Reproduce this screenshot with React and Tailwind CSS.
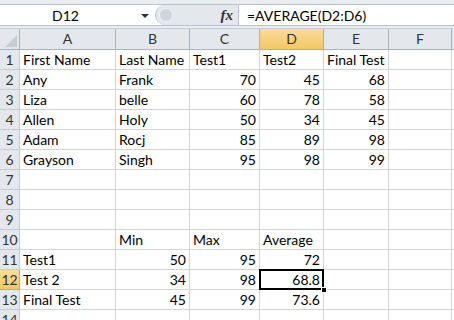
const cols = ["A", "B", "C", "D", "E", "F"];

const rows = [
  ["First Name", "Last Name", "Test1", "Test2", "Final Test", ""],
  ["Any", "Frank", 70, 45, 68, ""],
  ["Liza", "belle", 60, 78, 58, ""],
  ["Allen", "Holy", 50, 34, 45, ""],
  ["Adam", "Rocj", 85, 89, 98, ""],
  ["Grayson", "Singh", 95, 98, 99, ""],
  ["", "", "", "", "", ""],
  ["", "", "", "", "", ""],
  ["", "", "", "", "", ""],
  ["", "Min", "Max", "Average", "", ""],
  ["Test1", 50, 95, 72, "", ""],
  ["Test 2", 34, 98, 68.8, "", ""],
  ["Final Test", 45, 99, 73.6, "", ""],
  ["", "", "", "", "", ""],
];

const gridCols = "grid grid-cols-[20px_96px_74px_70px_64px_65px_63px_2px]";

function Cell({ value, selected }) {
  const isNum = typeof value === "number";
  return (
    <div
      className={`relative h-5 border-r border-b border-[#d4d4d4] px-[3px] text-[14px] leading-[19px] whitespace-nowrap overflow-visible ${
        isNum ? "text-right" : "text-left"
      } ${selected ? "z-10" : ""}`}
    >
      {selected && (
        <>
          <div className="absolute -left-[1px] -top-[1px] -right-[1px] -bottom-[1px] border-2 border-black" />
          <div className="absolute -right-[4px] -bottom-[4px] w-[6px] h-[6px] bg-black border border-white" />
        </>
      )}
      <span className="relative">{value}</span>
    </div>
  );
}

export default function App() {
  return (
    <div
      className="w-[454px] h-[320px] overflow-hidden bg-white text-black"
      style={{ fontFamily: "Lato, 'Noto Sans', sans-serif" }}
    >
      {/* FORMULA BAR */}
      <div className="h-[29px] bg-[#e9edf2] pt-1 border-b border-[#c5cdd8]">
        <div className="flex h-[22px] border-y border-[#b7c0cc] bg-white">
          <div className="w-[155px] flex items-center relative">
            <span className="flex-1 text-center text-[14px] pr-6">D12</span>
            <span className="absolute right-[6px] top-[9px] w-0 h-0 border-l-[4px] border-r-[4px] border-t-[4px] border-l-transparent border-r-transparent border-t-[#333]" />
          </div>
          <div className="w-[84px] flex items-center bg-[#e4e8ed] rounded-l-[12px] border-l border-[#b7c0cc] border-r">
            <span className="ml-[3px] w-[14px] h-[14px] rounded-full bg-[#d0d5db] border border-[#eef1f4]" />
            <span
              className="ml-auto mr-[5px] italic text-[15px] font-bold text-[#333]"
              style={{ fontFamily: "'Liberation Serif', serif" }}
            >
              fx
            </span>
          </div>
          <div className="flex-1 flex items-center pl-2 text-[14px]">=AVERAGE(D2:D6)</div>
        </div>
      </div>

      {/* COLUMN HEADERS */}
      <div className={`${gridCols} h-[21px]`}>
        <div className="bg-[#e4e8ed] border-r border-b border-[#a9b3bf] relative">
          <svg className="absolute right-[2px] bottom-[2px]" width="12" height="12">
            <polygon points="12,0 12,12 0,12" fill="#c6ccd3" />
          </svg>
        </div>
        {cols.map((c) => (
          <div
            key={c}
            className={`border-r border-b text-center text-[14px] leading-[20px] ${
              c === "D"
                ? "bg-gradient-to-b from-[#f9dd99] to-[#f3c763] border-[#e2a836] text-[#333]"
                : "bg-[#e4e8ed] border-[#a9b3bf] text-[#333]"
            }`}
          >
            {c}
          </div>
        ))}
        <div className="bg-[#e4e8ed] border-b border-[#a9b3bf]" />
      </div>

      {/* ROWS */}
      {rows.map((r, i) => (
        <div key={i} className={gridCols}>
          <div
            className={`h-5 border-r border-b text-center text-[14px] leading-[19px] ${
              i === 11
                ? "bg-gradient-to-b from-[#f9dd99] to-[#f3c763] border-[#e2a836] text-[#333]"
                : "bg-[#e4e8ed] border-[#c4cbd4] text-[#333]"
            }`}
          >
            {i + 1}
          </div>
          {r.map((v, j) => (
            <Cell key={j} value={v} selected={i === 11 && j === 3} />
          ))}
          <div className="h-5 border-b border-[#d4d4d4]" />
        </div>
      ))}
    </div>
  );
}
